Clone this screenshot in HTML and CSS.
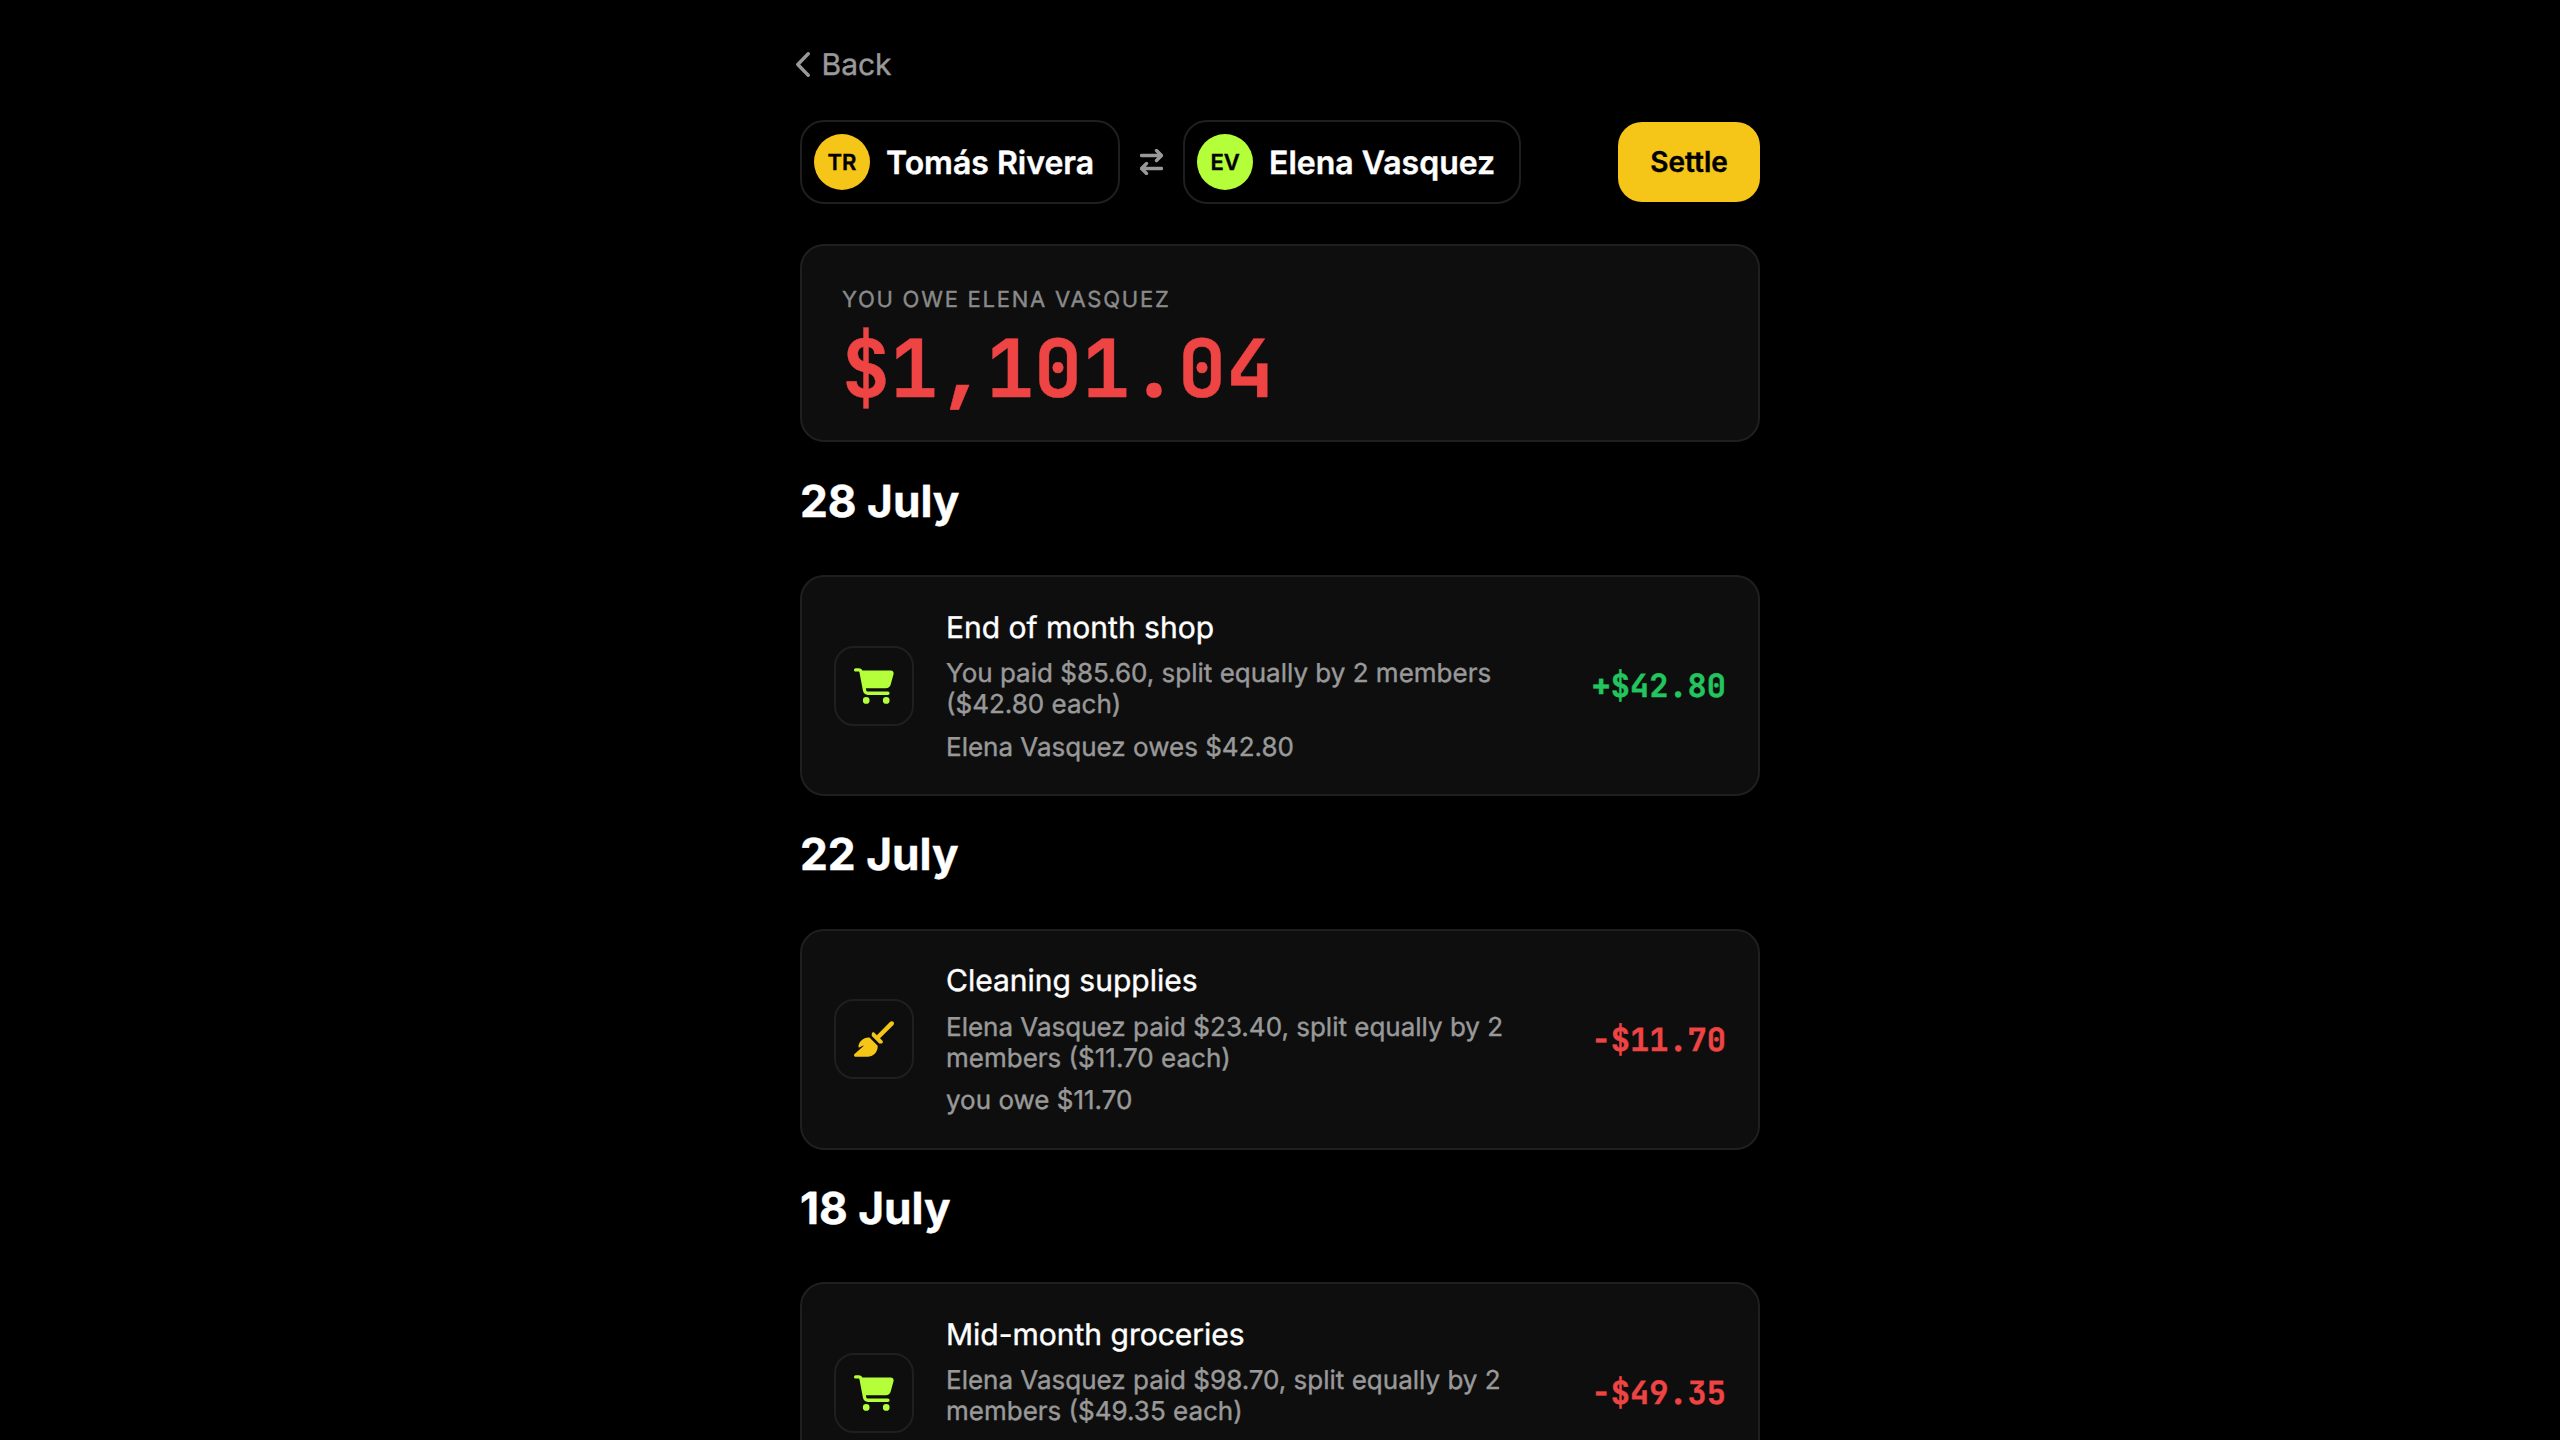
FILE: index.html
```
<!DOCTYPE html>
<html lang="en">
<head>
    <meta charset="UTF-8">
    <meta name="viewport" content="width=device-width, initial-scale=1.0">
    <title>Balance with Elena Vasquez</title>
    <link rel="stylesheet" href="styles.css">
</head>
<body>
    <!-- shared icons -->
    <svg class="sprite" aria-hidden="true">
        <symbol id="icon-cart" viewBox="0 0 576 512">
            <path d="M0 24C0 10.7 10.7 0 24 0H69.5c22 0 41.5 12.8 50.6 32h411c26.3 0 45.5 25 38.6 50.4l-41 152.3c-8.5 31.4-37 53.3-69.5 53.3H170.7l5.4 28.5c2.2 11.3 12.1 19.5 23.6 19.5H488c13.3 0 24 10.7 24 24s-10.7 24-24 24H199.7c-34.6 0-64.3-24.6-70.7-58.5L77.4 54.5c-.7-3.8-4-6.5-7.9-6.5H24C10.7 48 0 37.3 0 24zM128 464a48 48 0 1 1 96 0 48 48 0 1 1 -96 0zm336-48a48 48 0 1 1 0 96 48 48 0 1 1 0-96z"/>
        </symbol>
        <symbol id="icon-broom" viewBox="0 0 576 512">
            <path d="M566.6 54.6c12.5-12.5 12.5-32.8 0-45.3s-32.8-12.5-45.3 0l-192 192-34.7-34.7c-4.2-4.2-10-6.6-16-6.6c-12.5 0-22.6 10.1-22.6 22.6v29.1L364.3 320h29.1c12.5 0 22.6-10.1 22.6-22.6c0-6-2.4-11.8-6.6-16l-34.7-34.7 192-192zM341.1 353.4L222.6 234.9c-42.7-3.7-85.2 11.7-115.8 42.3l-8 8C76.5 307.5 64 337.7 64 369.2c0 6.8 7.1 11.2 13.2 8.2l51.1-25.5c5-2.5 9.5 4.1 5.4 7.9L7.3 473.4C2.7 477.6 0 483.6 0 489.9C0 502.1 9.9 512 22.1 512l173.3 0c38.8 0 75.9-15.4 103.4-42.8c30.6-30.6 45.9-73.1 42.3-115.8z"/>
        </symbol>
    </svg>

    <div class="page">
        <a class="back">
            <svg class="chevron" viewBox="0 0 14 25"><path d="M12.2 1.8L1.8 12.5l10.4 10.7"/></svg>
            Back
        </a>

        <div class="people">
            <div class="person">
                <span class="avatar yellow">TR</span>
                <span class="name">Tomás Rivera</span>
            </div>
            <svg class="swap" viewBox="0 0 23 26"><path d="M1.5 6.5h20M16.5 1.5l5 5-5 5M21.5 19.5h-20M6.5 14.5l-5 5 5 5"/></svg>
            <div class="person">
                <span class="avatar lime">EV</span>
                <span class="name">Elena Vasquez</span>
            </div>
            <button class="settle">Settle</button>
        </div>

        <div class="card balance">
            <div class="label">You owe Elena Vasquez</div>
            <div class="total">$1,101.04</div>
        </div>

        <h2>28 July</h2>
        <div class="card expense">
            <div class="category lime-icon"><svg><use href="#icon-cart"/></svg></div>
            <div class="details">
                <div class="title">End of month shop</div>
                <div class="info">You paid $85.60, split equally by 2 members ($42.80 each)</div>
                <div class="info">Elena Vasquez owes $42.80</div>
            </div>
            <div class="amount plus">+$42.80</div>
        </div>

        <h2>22 July</h2>
        <div class="card expense">
            <div class="category yellow-icon"><svg><use href="#icon-broom"/></svg></div>
            <div class="details">
                <div class="title">Cleaning supplies</div>
                <div class="info">Elena Vasquez paid $23.40, split equally by 2 members ($11.70 each)</div>
                <div class="info">you owe $11.70</div>
            </div>
            <div class="amount minus">-$11.70</div>
        </div>

        <h2>18 July</h2>
        <div class="card expense">
            <div class="category lime-icon"><svg><use href="#icon-cart"/></svg></div>
            <div class="details">
                <div class="title">Mid-month groceries</div>
                <div class="info">Elena Vasquez paid $98.70, split equally by 2 members ($49.35 each)</div>
                <div class="info">you owe $49.35</div>
            </div>
            <div class="amount minus">-$49.35</div>
        </div>
    </div>
</body>
</html>
```
FILE: styles.css
```
* {
    box-sizing: border-box;
}
body {
    margin: 0;
    height: 100vh;
    overflow: hidden;
    background-color: #000;
    color: #fff;
    font-family: Inter, sans-serif;
    text-rendering: geometricPrecision;
    -webkit-text-stroke: 0.4px;
}
.sprite {
    display: none;
}
.page {
    width: 960px;
    margin: 0 auto;
    padding-top: 44px;
}
.back {
    display: flex;
    align-items: center;
    gap: 11.5px;
    height: 41px;
    margin-left: -4px;
    color: #999;
    font-size: 30px;
}
.chevron {
    width: 14px;
    height: 25px;
    margin-bottom: 1px;
}
.chevron path,
.swap path {
    fill: none;
    stroke: #999;
    stroke-width: 3.4;
    stroke-linecap: round;
    stroke-linejoin: round;
}
.people {
    display: flex;
    align-items: center;
    height: 84px;
    margin-top: 35px;
}
.person {
    display: flex;
    align-items: center;
    gap: 16px;
    height: 84px;
    padding: 0 24px 0 12px;
    border: 2px solid #1f1f1f;
    border-radius: 24px;
}
.avatar {
    display: flex;
    align-items: center;
    justify-content: center;
    width: 56px;
    height: 56px;
    padding-top: 1px;
    border-radius: 50%;
    color: #000;
    font-size: 22px;
    font-weight: 600;
}
.yellow {
    background-color: #f5c518;
}
.lime {
    background-color: #b4ff39;
}
.name {
    font-size: 32px;
    font-weight: 600;
}
.swap {
    width: 23px;
    height: 26px;
    margin: 0 20px 1px;
}
.settle {
    width: 142px;
    height: 80px;
    margin-left: auto;
    padding: 0;
    border: none;
    border-radius: 24px;
    background-color: #f5c518;
    color: #000;
    font-family: inherit;
    font-size: 28px;
    font-weight: 600;
}
.card {
    border: 2px solid #1f1f1f;
    border-radius: 24px;
    background-color: #0e0e0e;
}
.balance {
    height: 198px;
    margin-top: 40px;
    margin-bottom: 27.8px;
    padding: 40px;
}
.label {
    color: #8a8a8a;
    font-size: 22px;
    line-height: 28px;
    letter-spacing: 1.76px;
    text-transform: uppercase;
}
.total {
    margin-top: 10px;
    color: #ef4444;
    font-family: "JetBrains Mono", "DejaVu Sans Mono", monospace;
    font-size: 80px;
    line-height: 88px;
    font-weight: 700;
}
h2 {
    margin: 27px 0 43px;
    font-size: 44.2px;
    line-height: 62.5px;
    font-weight: 700;
}
.expense {
    display: flex;
    align-items: center;
    gap: 32px;
    height: 221px;
    padding: 0 32px;
}
.category {
    display: flex;
    align-items: center;
    justify-content: center;
    flex-shrink: 0;
    width: 80px;
    height: 80px;
    border: 2px solid #1f1f1f;
    border-radius: 20px;
}
.category svg {
    width: 40px;
    height: 36px;
}
.lime-icon {
    fill: #b4ff39;
}
.yellow-icon {
    fill: #f5c518;
}
.details {
    flex: 1;
}
.title {
    font-size: 30px;
    line-height: 38px;
}
.info {
    margin-top: 11.7px;
    color: #999;
    font-size: 26px;
    line-height: 31px;
}
.amount {
    margin-left: 32px;
    font-family: "JetBrains Mono", "DejaVu Sans Mono", monospace;
    font-size: 32px;
    font-weight: 600;
}
.plus {
    color: #22c55e;
}
.minus {
    color: #ef4444;
}
```
